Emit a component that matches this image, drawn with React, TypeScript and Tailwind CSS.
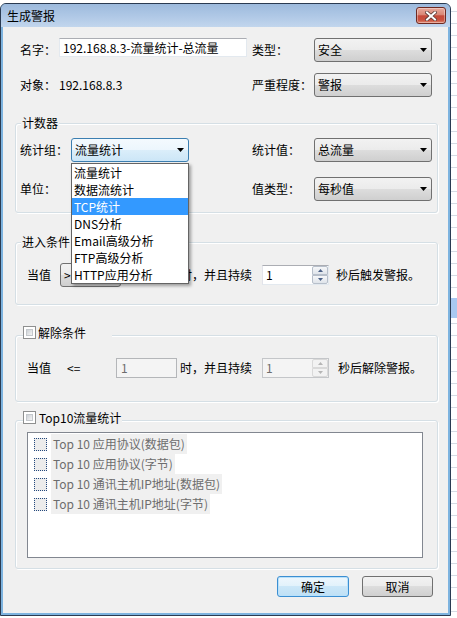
import clsx from "clsx";

const FONT = "font-['Noto_Sans_CJK_SC','Noto_Sans',sans-serif]";

const DROPDOWN_ITEMS = [
  "流量统计",
  "数据流统计",
  "TCP统计",
  "DNS分析",
  "Email高级分析",
  "FTP高级分析",
  "HTTP应用分析",
];

const TOP10_ITEMS = [
  "Top 10 应用协议(数据包)",
  "Top 10 应用协议(字节)",
  "Top 10 通讯主机IP地址(数据包)",
  "Top 10 通讯主机IP地址(字节)",
];

function Arrow({ up, color = "#000" }: { up?: boolean; color?: string }) {
  return (
    <svg width="7" height="4" viewBox="0 0 7 4">
      <path d={up ? "M0 4h7L3.5 0z" : "M0 0h7L3.5 4z"} fill={color} />
    </svg>
  );
}

function Combo({
  text,
  className,
  focused,
}: {
  text?: string;
  className?: string;
  focused?: boolean;
}) {
  return (
    <div
      className={clsx(
        "flex h-[24px] shrink-0 items-center justify-between rounded-[3px] border pl-[3px] pr-[4px] leading-[22px]",
        focused
          ? "border-[#3c7fb1] bg-[linear-gradient(#f4fafe_0%,#ecf6fd_50%,#dbeefa_50%,#cce6f7_100%)]"
          : "border-[#707070] bg-[linear-gradient(#f2f2f2_0%,#ebebeb_50%,#dddddd_50%,#cfcfcf_100%)]",
        className
      )}
    >
      <span>{text}</span>
      <Arrow />
    </div>
  );
}

function CheckBox() {
  return (
    <div className="h-[13px] w-[13px] shrink-0 border border-[#8e8f8f] bg-white p-[2px]">
      <div className="h-full w-full border border-[#c4c8cc] bg-[linear-gradient(135deg,#cdd1d6,#f4f4f4)]" />
    </div>
  );
}

function SpinBtn({ up, disabled }: { up?: boolean; disabled?: boolean }) {
  return (
    <div
      className={clsx(
        "flex flex-1 items-center justify-center border",
        up ? "rounded-t-[2px]" : "rounded-b-[2px]",
        disabled
          ? "border-[#d9d9d9] bg-[#f2f2f2]"
          : "border-[#b7bfca] bg-[linear-gradient(#f6f7f9,#dfe4ea)]"
      )}
    >
      <svg width="5" height="3" viewBox="0 0 5 3">
        <path
          d={up ? "M0 3h5L2.5 0z" : "M0 0h5L2.5 3z"}
          fill={disabled ? "#b5b5b5" : "#4b6187"}
        />
      </svg>
    </div>
  );
}

function Spin({ disabled }: { disabled?: boolean }) {
  return (
    <div
      className={clsx(
        "flex h-[20px] w-[67px] shrink-0 border",
        disabled
          ? "border-[#c4c6c9] bg-[#f4f4f4] text-[#6d6d6d]"
          : "border-[#e3e9ef] border-l-[#e2e3ea] border-t-[#abadb3] bg-white"
      )}
    >
      <span className="flex-1 pl-[3px] leading-[18px]">1</span>
      <div className="flex w-[16px] flex-col">
        <SpinBtn up disabled={disabled} />
        <SpinBtn disabled={disabled} />
      </div>
    </div>
  );
}

function Group({
  title,
  header,
  className,
  children,
}: {
  title?: string;
  header?: React.ReactNode;
  className?: string;
  children?: React.ReactNode;
}) {
  return (
    <div
      className={clsx(
        "relative ml-[12px] w-[423px] shrink-0 rounded-[3px] border border-[#d5dfe5] shadow-[inset_1px_1px_0_#ffffff,1px_1px_0_#ffffff]",
        className
      )}
    >
      {title && (
        <span className="absolute left-[5px] top-[-9px] bg-[#f0f0f0] px-[1px] leading-[16px]">
          {title}
        </span>
      )}
      {header && (
        <div className="absolute left-[7px] top-[-10px] flex h-[13px] items-center bg-[#f0f0f0]">
          {header}
        </div>
      )}
      {children}
    </div>
  );
}

function CloseButton() {
  return (
    <div className="mt-[3px] flex h-[17px] w-[30px] items-center justify-center rounded-[3px] border border-[#6e2a22] bg-[linear-gradient(#e8aa9d_0%,#d98675_45%,#c5493a_52%,#c9503e_80%,#e08a72_100%)] shadow-[inset_0_0_0_1px_rgba(255,255,255,0.35)]">
      <svg width="12" height="10" viewBox="0 0 12 10">
        <path d="M2 1.5l8 7M10 1.5l-8 7" stroke="#5a3a36" strokeWidth="3.6" strokeLinecap="square" />
        <path d="M2 1.5l8 7M10 1.5l-8 7" stroke="#ffffff" strokeWidth="2" strokeLinecap="square" />
      </svg>
    </div>
  );
}

function Dropdown() {
  return (
    <div className="absolute left-[68px] top-[136px] w-[118px] border border-[#646464] bg-white shadow-[2px_2px_3px_rgba(0,0,0,0.35)]">
      {DROPDOWN_ITEMS.map((item) => (
        <div
          key={item}
          className={clsx(
            "h-[17px] pl-[2px] leading-[17px]",
            item === "TCP统计" && "bg-[#3399ff] text-white"
          )}
        >
          {item}
        </div>
      ))}
    </div>
  );
}

function Client() {
  return (
    <div className="relative mx-[2px] flex flex-1 flex-col bg-[#f0f0f0]">
      {/* name / type */}
      <div className="mt-[11px] flex h-[24px] items-center pl-[17px]">
        <div className="flex h-full w-[232px] items-center">
          <span className="w-[39px]">名字：</span>
          <div className="flex h-[19px] w-[188px] items-center self-start border border-[#e3e9ef] border-t-[#abadb3] bg-white pl-[3px] pt-[1px]">
            192.168.8.3-流量统计-总流量
          </div>
        </div>
        <span className="w-[62px]">类型：</span>
        <Combo text="安全" className="w-[118px]" />
      </div>

      {/* object / severity */}
      <div className="mt-[11px] flex h-[24px] items-center pl-[17px]">
        <div className="flex w-[232px] items-center">
          <span className="w-[39px]">对象：</span>
          <span>192.168.8.3</span>
        </div>
        <span className="w-[62px]">严重程度：</span>
        <Combo text="警报" className="w-[118px]" />
      </div>

      {/* counter */}
      <Group title="计数器" className="mt-[26px] h-[90px] pt-[14px]">
        <div className="flex h-[24px] items-center pl-[4px]">
          <div className="flex w-[232px] items-center">
            <span className="w-[51px]">统计组：</span>
            <Combo text="流量统计" focused className="w-[118px]" />
          </div>
          <span className="w-[62px]">统计值：</span>
          <Combo text="总流量" className="w-[118px]" />
        </div>
        <div className="mt-[15px] flex h-[24px] items-center pl-[4px]">
          <div className="flex w-[232px] items-center">
            <span className="w-[51px]">单位：</span>
          </div>
          <span className="w-[62px]">值类型：</span>
          <Combo text="每秒值" className="w-[118px]" />
        </div>
      </Group>

      {/* enter condition */}
      <Group title="进入条件" className="mt-[29px] h-[63px] pt-[20px]">
        <div className="flex h-[24px] items-center pl-[11px]">
          <span className="w-[33px]">当值</span>
          <Combo text=">=" className="w-[61px]" />
          <span className="ml-[59px] w-[82px]">时，并且持续</span>
          <Spin />
          <span className="ml-[7px]">秒后触发警报。</span>
        </div>
      </Group>

      {/* leave condition */}
      <Group
        className="mt-[30px] h-[67px] pt-[20px]"
        header={
          <div className="flex w-[89px] items-center">
            <CheckBox />
            <span className="ml-[2px] leading-[16px]">解除条件</span>
          </div>
        }
      >
        <div className="flex h-[24px] items-center pl-[11px]">
          <span className="w-[40px]">当值</span>
          <span className="w-[49px]">&lt;=</span>
          <div className="h-[20px] w-[61px] shrink-0 border border-[#b4b6b9] bg-[#f4f4f4] pl-[4px] leading-[18px] text-[#6d6d6d]">
            1
          </div>
          <span className="ml-[3px] w-[82px]">时，并且持续</span>
          <Spin disabled />
          <span className="ml-[9px]">秒后解除警报。</span>
        </div>
      </Group>

      {/* top10 */}
      <Group
        className="mt-[18px] h-[149px] pt-[11px]"
        header={
          <div className="flex items-center pr-[1px]">
            <CheckBox />
            <span className="ml-[3px] leading-[16px]">Top10流量统计</span>
          </div>
        }
      >
        <div className="ml-[11px] h-[126px] w-[396px] border border-[#828790] bg-white pl-[6px] pt-[1px]">
          {TOP10_ITEMS.map((item) => (
            <div key={item} className="flex h-[20px] items-center">
              <div className="h-[13px] w-[13px] shrink-0 border border-dotted border-[#24497e] bg-[#ececec]" />
              <span className="ml-[4px] h-[20px] bg-[#f0f0f0] px-[2px] leading-[20px] text-[#6d6d6d]">
                {item}
              </span>
            </div>
          ))}
        </div>
      </Group>

      {/* buttons */}
      <div className="mt-[7px] flex justify-end gap-[13px] pr-[15px]">
        <div className="flex h-[21px] w-[72px] items-center justify-center rounded-[3px] border border-[#3c8fd2] bg-[linear-gradient(#eef7fd_0%,#e1f1fb_50%,#cbe7f8_50%,#bfe0f5_100%)] shadow-[inset_0_0_0_1px_#b9e1fb]">
          确定
        </div>
        <div className="flex h-[21px] w-[71px] items-center justify-center rounded-[3px] border border-[#707070] bg-[linear-gradient(#f2f2f2_0%,#ebebeb_50%,#dddddd_50%,#cfcfcf_100%)]">
          取消
        </div>
      </div>

      <Dropdown />
    </div>
  );
}

function RightStrip() {
  return (
    <div className="flex h-[618px] w-[6px] flex-col bg-[repeating-linear-gradient(to_bottom,#ffffff_0px,#ffffff_11px,#d5dbe3_11px,#d5dbe3_12px)]">
      <div className="h-[298px]" />
      <div className="h-[20px] bg-[#a9c9f1]" />
    </div>
  );
}

export default function App() {
  return (
    <div
      className={clsx(
        "relative h-[618px] w-[457px] overflow-hidden bg-white text-[12px] leading-[16px] text-black",
        FONT
      )}
    >
      <div className="flex">
        <div className="flex h-[616px] w-[451px] shrink-0 flex-col pt-[3px]">
          <div className="flex flex-1 flex-col rounded-t-[6px] border border-[#2b3b52] bg-[#7db3df] pb-[2px]">
            <div className="flex h-[23px] shrink-0 items-start justify-between rounded-t-[5px] bg-[linear-gradient(#9dbadd,#b2cae7_60%,#c2d6ed)] pl-[6px] pr-[4px]">
              <span className="mt-[4px] leading-[16px]">生成警报</span>
              <CloseButton />
            </div>
            <Client />
          </div>
        </div>
        <RightStrip />
      </div>
    </div>
  );
}
